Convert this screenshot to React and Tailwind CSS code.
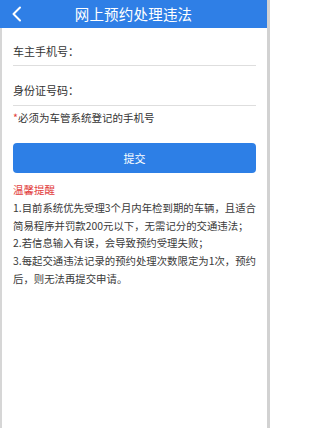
import React from 'react';

const tips = [
  '1.目前系统优先受理3个月内年检到期的车辆，且适合简易程序并罚款200元以下，无需记分的交通违法；',
  '2.若信息输入有误，会导致预约受理失败；',
  '3.每起交通违法记录的预约处理次数限定为1次，预约后，则无法再提交申请。',
];

const App = () => {
  return (
    <div className="w-[270px] h-[428px] bg-white flex flex-col border-r-[3px] border-[#d2d2d2] font-['Noto_Sans_CJK_SC','Noto_Sans',sans-serif] text-[#333]">
      {/* top bar */}
      <div className="relative h-[28px] bg-[#2f7fe6] flex items-center justify-center">
        <svg className="absolute left-[11px] top-[6px]" width="12" height="16" viewBox="0 0 12 16" fill="none">
          <polyline points="9,1.5 2.5,8 9,14.5" stroke="white" strokeWidth="2" strokeLinecap="round" strokeLinejoin="round" />
        </svg>
        <span className="text-white text-[14.5px] tracking-[0.2px]">网上预约处理违法</span>
      </div>

      <div className="flex-1 flex flex-col border-l-2 border-[#d6d6d6] px-[11px]">
        <div className="h-[38px] pt-[10px] flex items-center border-b border-[#dedede] text-[11px]">
          车主手机号：
        </div>
        <div className="h-[40px] pt-[10px] flex items-center border-b border-[#dedede] text-[11px]">
          身份证号码：
        </div>
        <p className="mt-[4px] leading-[16px] text-[10.5px]">
          <span className="text-[#e23b3b]">*</span>必须为车管系统登记的手机号
        </p>

        <button className="mt-[17px] h-[30px] rounded-[4px] bg-[#2d7fe6] text-white text-[11px]">
          提交
        </button>

        <div className="mt-[8px] leading-[18px] text-[10.5px] text-[#e23b3b]">温馨提醒</div>
        <div className="text-[10.4px] leading-[17.7px] text-[#3a3a3a]">
          {tips.map((t, i) => (
            <p key={i}>{t}</p>
          ))}
        </div>
      </div>
    </div>
  );
};

export default App;
